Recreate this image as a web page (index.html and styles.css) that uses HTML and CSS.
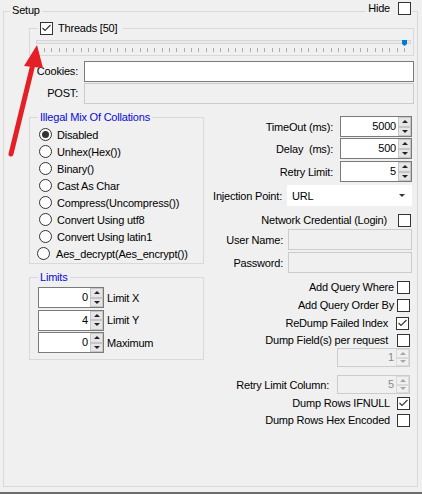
FILE: index.html
```html
<!DOCTYPE html>
<html>
<head>
<meta charset="utf-8">
<title>Setup</title>
<link rel="stylesheet" href="styles.css">
</head>
<body>
<div class="setup">
  <div class="setup-head">
    <span class="caption">Setup</span>
    <span class="hide"><span>Hide</span><span class="cb"></span></span>
  </div>
  <div class="content">
    <div class="group threads">
      <div class="gtitle threads-title">
        <span class="cb"><svg viewBox="0 0 11 11" width="11" height="11"><polyline points="1.5,5 4,7.5 9.5,2" /></svg></span>
        <span>Threads [50]</span>
      </div>
      <svg class="trackbar" width="375" height="12" viewBox="0 0 375 12">
        <rect class="channel" x="0.5" y="0.5" width="374" height="3"/>
        <path class="ticks" d="M8.5 8v4M15.5 8v4M23.5 8v4M30.5 8v4M37.5 8v4M45.5 8v4M52.5 8v4M59.5 8v4M67.5 8v4M74.5 8v4M81.5 8v4M89.5 8v4M96.5 8v4M104.5 8v4M111.5 8v4M118.5 8v4M126.5 8v4M133.5 8v4M140.5 8v4M148.5 8v4M155.5 8v4M162.5 8v4M170.5 8v4M177.5 8v4M184.5 8v4M192.5 8v4M199.5 8v4M206.5 8v4M214.5 8v4M221.5 8v4M228.5 8v4M236.5 8v4M243.5 8v4M250.5 8v4M258.5 8v4M265.5 8v4M272.5 8v4M280.5 8v4M287.5 8v4M295.5 8v4M302.5 8v4M309.5 8v4M317.5 8v4M324.5 8v4M331.5 8v4M339.5 8v4M346.5 8v4M353.5 8v4M361.5 8v4M368.5 8v4"/>
        <path class="thumb" d="M366 0h5v4l-2.5 2l-2.5 -2z"/>
      </svg>
    </div>

    <div class="fields">
      <span class="flabel">Cookies:</span><div class="tb"></div>
      <span class="flabel">POST:</span><div class="tb disabled"></div>
    </div>

    <div class="columns">
      <div class="left">
        <div class="group collations">
          <div class="gtitle blue">Illegal Mix Of Collations</div>
          <div class="radios">
            <div class="radio-row"><span class="radio on"></span><span>Disabled</span></div>
            <div class="radio-row"><span class="radio"></span><span>Unhex(Hex())</span></div>
            <div class="radio-row"><span class="radio"></span><span>Binary()</span></div>
            <div class="radio-row"><span class="radio"></span><span>Cast As Char</span></div>
            <div class="radio-row"><span class="radio"></span><span>Compress(Uncompress())</span></div>
            <div class="radio-row"><span class="radio"></span><span>Convert Using utf8</span></div>
            <div class="radio-row"><span class="radio"></span><span>Convert Using latin1</span></div>
            <div class="radio-row shift"><span class="radio"></span><span>Aes_decrypt(Aes_encrypt())</span></div>
          </div>
        </div>
        <div class="group limits">
          <div class="gtitle blue">Limits</div>
          <div class="limit-rows">
            <div class="limit-row"><div class="spin small"><span class="val">0</span><span class="btns"><i class="up"></i><i class="dn"></i></span></div><span>Limit X</span></div>
            <div class="limit-row"><div class="spin small"><span class="val">4</span><span class="btns"><i class="up"></i><i class="dn"></i></span></div><span>Limit Y</span></div>
            <div class="limit-row"><div class="spin small"><span class="val">0</span><span class="btns"><i class="up"></i><i class="dn"></i></span></div><span>Maximum</span></div>
          </div>
        </div>
      </div>

      <div class="right">
        <div class="row spin-row"><span>TimeOut (ms):</span><div class="spin wide"><span class="val">5000</span><span class="btns"><i class="up"></i><i class="dn"></i></span></div></div>
        <div class="row spin-row r-delay"><span class="pre">Delay  (ms):</span><div class="spin wide"><span class="val">500</span><span class="btns"><i class="up"></i><i class="dn"></i></span></div></div>
        <div class="row spin-row r-retry"><span>Retry Limit:</span><div class="spin wide"><span class="val">5</span><span class="btns"><i class="up"></i><i class="dn"></i></span></div></div>
        <div class="row combo-row"><span>Injection Point:</span><div class="combo"><span>URL</span><i class="caret"></i></div></div>
        <div class="row chk-row r-netcred"><span>Network Credential (Login)</span><span class="cb"></span></div>
        <div class="row tb-row"><span>User Name:</span><div class="tb disabled"></div></div>
        <div class="row tb-row"><span>Password:</span><div class="tb disabled"></div></div>
        <div class="row chk-row r-where"><span>Add Query Where</span><span class="cb"></span></div>
        <div class="row chk-row r-order"><span>Add Query Order By</span><span class="cb"></span></div>
        <div class="row chk-row r-redump"><span>ReDump Failed Index</span><span class="cb"><svg viewBox="0 0 11 11" width="11" height="11"><polyline points="1.5,5 4,7.5 9.5,2" /></svg></span></div>
        <div class="row chk-row r-field"><span>Dump Field(s) per request</span><span class="cb"></span></div>
        <div class="row dspin-row r-fieldspin"><div class="spin dis"><span class="val">1</span><span class="btns"><i class="up"></i><i class="dn"></i></span></div></div>
        <div class="row dspin-row r-retrycol"><span>Retry Limit Column:</span><div class="spin dis"><span class="val">5</span><span class="btns"><i class="up"></i><i class="dn"></i></span></div></div>
        <div class="row chk-row r-ifnull"><span>Dump Rows IFNULL</span><span class="cb"><svg viewBox="0 0 11 11" width="11" height="11"><polyline points="1.5,5 4,7.5 9.5,2" /></svg></span></div>
        <div class="row chk-row r-hex"><span>Dump Rows Hex Encoded</span><span class="cb"></span></div>
      </div>
    </div>
  </div>
</div>
<div class="statusbar"></div>

<svg class="annot" width="422" height="494" viewBox="0 0 422 494">
  <line x1="33" y1="64" x2="11" y2="154" stroke="#e41f25" stroke-width="5" stroke-linecap="round"/>
  <polygon points="37,45 24,66 43,68" fill="#e41f25"/>
</svg>
</body>
</html>
```

FILE: styles.css
```css
* { box-sizing: border-box; }
html, body { margin: 0; padding: 0; }
body {
  width: 422px;
  height: 494px;
  background: #f0f0f0;
  font-family: "Liberation Sans", Arial, sans-serif;
  font-size: 11px;
  letter-spacing: -0.2px;
  color: #000;
  position: relative;
  overflow: hidden;
}

.setup {
  margin: 11px 4px 0 3px;
  height: 476px;
  border: 1px solid #d9d9d9;
}
.setup-head {
  display: flex;
  justify-content: space-between;
  align-items: flex-start;
  height: 20px;
  margin-top: -12px;
}
.caption {
  margin: 3px 0 0 6px;
  padding: 0 2px;
  line-height: 14px;
  background: #f0f0f0;
}
.hide {
  display: flex;
  align-items: center;
  gap: 8px;
  height: 13px;
  margin: 2px 5px 0 0;
  padding: 0 1px 0 2px;
  background: #f0f0f0;
  line-height: 13px;
}

.content { margin: 0 3px 0 25px; }

.group { border: 1px solid #d9d9d9; }
.gtitle {
  display: flex;
  align-items: center;
  width: fit-content;
  height: 14px;
  margin: -8px 0 0 8px;
  padding: 0 2px;
  background: #f0f0f0;
  line-height: 14px;
}
.blue { color: #0a0ad8; }

.cb {
  display: inline-flex;
  align-items: center;
  justify-content: center;
  width: 13px;
  height: 13px;
  flex: none;
  border: 1px solid #333;
  background: #fff;
}
.cb svg { display: block; }
.cb polyline { fill: none; stroke: #333; stroke-width: 1.1; }

.threads { margin-top: 8px; padding-bottom: 3px; }
.threads-title { gap: 5px; padding-right: 6px; }
.trackbar { display: block; margin: 5px 0 0 6px; }
.trackbar .channel { fill: #e7eaea; stroke: #d6d6d6; stroke-width: 1; }
.trackbar .ticks { stroke: #ababab; stroke-width: 1; }
.trackbar .thumb { fill: #007ad9; }

.fields {
  display: grid;
  grid-template-columns: 49px 330px;
  column-gap: 6px;
  row-gap: 1px;
  margin-top: 5px;
}
.flabel { text-align: right; line-height: 21px; }
.tb {
  height: 21px;
  background: #fff;
  border: 1px solid #7a7a7a;
}
.tb.disabled { background: #f0f0f0; border-color: #cccccc; }

.columns {
  display: grid;
  grid-template-columns: 175px 1fr;
  margin-top: 12px;
}

.collations { margin-top: 1px; padding-bottom: 1px; }
.radios { margin-top: 2px; }
.radio-row {
  display: flex;
  align-items: center;
  gap: 5px;
  height: 17px;
  padding-left: 9px;
}
.radio-row.shift { padding-left: 7px; gap: 6px; }
.radio {
  display: flex;
  align-items: center;
  justify-content: center;
  width: 13px;
  height: 13px;
  border-radius: 50%;
  border: 1px solid #333;
  background: #fff;
  flex: none;
}
.radio.on::after {
  content: "";
  width: 7px;
  height: 7px;
  border-radius: 50%;
  background: #333;
}

.limits { margin-top: 13px; padding-bottom: 6px; }
.limit-rows {
  display: flex;
  flex-direction: column;
  gap: 1.5px;
  margin: 3px 0 0 8px;
}
.limit-row { display: flex; align-items: center; gap: 3px; }

.spin {
  display: flex;
  height: 21px;
  border: 1px solid #7a7a7a;
  background: #fff;
}
.spin.small { width: 66px; }
.spin.wide { width: 72px; }
.spin .val {
  flex: 1;
  text-align: right;
  padding-right: 2px;
  line-height: 19px;
}
.btns {
  display: flex;
  flex-direction: column;
  width: 13px;
}
.btns i {
  flex: 1;
  display: flex;
  align-items: center;
  justify-content: center;
  background: #e6e6e6;
  border: 1px solid #c6c6c6;
}
.btns i::after {
  content: "";
  border-left: 3px solid transparent;
  border-right: 3px solid transparent;
}
.btns .up::after { border-bottom: 3px solid #222; }
.btns .dn::after { border-top: 3px solid #222; }

.spin.dis {
  width: 73px;
  height: 19px;
  border-color: #cccccc;
  background: #f0f0f0;
  color: #8a8a8a;
}
.spin.dis .val { line-height: 17px; }
.spin.dis .btns i { background: #f0f0f0; border-color: #dadada; }
.spin.dis .btns .up::after { border-bottom-color: #a6a6a6; }
.spin.dis .btns .dn::after { border-top-color: #a6a6a6; }

.right { display: flex; flex-direction: column; }
.row { display: flex; justify-content: flex-end; align-items: center; }
.pre { white-space: pre; }

.spin-row { height: 21px; gap: 7px; margin-right: 2px; }
.r-delay { margin-top: 1px; }
.r-retry { margin-top: 2px; }

.combo-row { height: 21px; gap: 5px; margin: 3px 2px 0 0; }
.combo {
  display: flex;
  align-items: center;
  justify-content: space-between;
  width: 125px;
  height: 21px;
  padding: 0 7px 0 5px;
  background: #fff;
}
.caret {
  width: 0;
  height: 0;
  border-left: 3px solid transparent;
  border-right: 3px solid transparent;
  border-top: 3px solid #333;
}

.chk-row { height: 13px; line-height: 13px; }
.r-netcred { margin: 8px 3px 0 0; gap: 11px; }

.tb-row { height: 21px; gap: 5px; margin: 2px 2px 0 0; }
.tb-row .tb { width: 124px; }

.r-where { margin: 8px 4px 0 0; gap: 3px; }
.r-order { margin: 5px 4px 0 0; gap: 3px; }
.r-redump { margin: 5px 5px 0 0; gap: 8px; }
.r-field { margin: 4px 4px 0 0; gap: 9px; }
.dspin-row { height: 19px; gap: 8px; margin-right: 4px; }
.r-fieldspin { margin-top: 1px; }
.r-retrycol { margin-top: 8px; }
.r-ifnull { margin: 3px 4px 0 0; gap: 7px; }
.r-hex { margin: 4px 4px 0 0; gap: 7px; }

.statusbar {
  margin-top: 5px;
  height: 2px;
  background: #6d6d6d;
}

.annot {
  position: absolute;
  left: 0;
  top: 0;
  pointer-events: none;
}
```
